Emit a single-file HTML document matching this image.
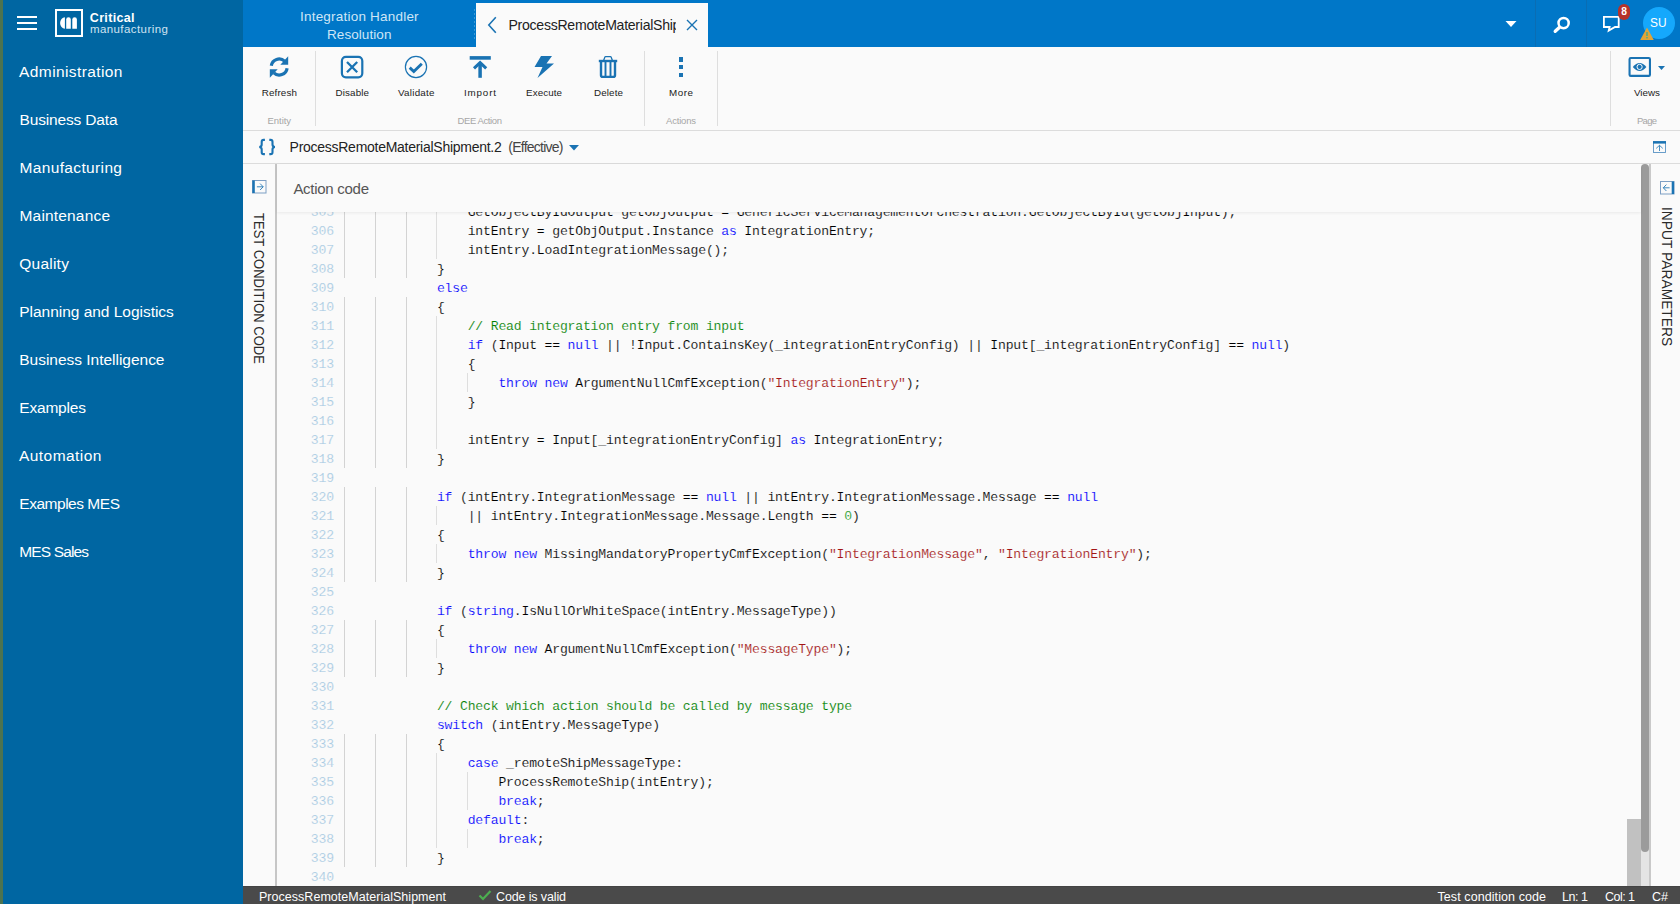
<!DOCTYPE html>
<html><head><meta charset="utf-8"><title>Critical Manufacturing</title>
<style>
*{box-sizing:border-box;margin:0;padding:0}
html,body{width:1680px;height:904px;overflow:hidden;background:#fafafa;font-family:"Liberation Sans",sans-serif}
#root{position:relative;width:1680px;height:904px;overflow:hidden;background:#fafafa}
.t{position:absolute;white-space:pre;}
.a{position:absolute}
.mono{font-family:"Liberation Mono",monospace}
#code{position:absolute;left:277px;top:212px;width:1364px;height:674px;overflow:hidden;background:#fafafa}
.ln{position:absolute;left:0;height:19px;width:1363px;font-family:"Liberation Mono",monospace;font-size:13.1px;letter-spacing:-0.172px;line-height:19px;white-space:pre;color:#000;-webkit-text-stroke:0.14px #fafafa}
.ln .no{position:absolute;left:0;width:56.9px;text-align:right;color:#a9cbe3}
.ln .tx{position:absolute;left:67.7px;top:0}
.g{position:absolute;top:0;width:1px;height:19px;background:#d3d3d3}
.g.i{background:#dedede}
.k{color:#0000ff}.s{color:#a31515}.c{color:#008000}.n{color:#1e9a28}
</style></head><body><div id="root">

<div class="a" style="left:0;top:0;width:3px;height:904px;background:#4c7350"></div>
<div class="a" style="left:3px;top:0;width:240px;height:904px;background:#0066a2"></div>
<div class="a" style="left:17px;top:16px;width:20px;height:1.75px;background:#fff"></div>
<div class="a" style="left:17px;top:22px;width:20px;height:1.75px;background:#fff"></div>
<div class="a" style="left:17px;top:28.25px;width:20px;height:1.75px;background:#fff"></div>
<div class="a" style="left:55px;top:9px;width:28px;height:28px;border:2px solid #fff"></div>
<svg class="a" style="left:55px;top:9px" width="28" height="28" viewBox="0 0 28 28">
<path d="M9.9 8.2 A4.8 5.8 0 0 0 9.9 19.8 Z" fill="#fff"/>
<path d="M11.2 19.8 V10.5 A2.3 2.3 0 0 1 15.8 10.5 V19.8 Z" fill="#fff"/>
<path d="M17.3 19.8 V10.5 A2.3 2.3 0 0 1 21.9 10.5 V19.8 Z" fill="#fff"/>
</svg>
<div class="t" style="left:89.80px;top:8.50px;font-size:12.5px;line-height:18px;letter-spacing:0.332px;color:#fff;font-weight:700;">Critical</div>
<div class="t" style="left:89.90px;top:20.50px;font-size:11.5px;line-height:16px;letter-spacing:0.427px;color:#cfe3f1;font-weight:400;">manufacturing</div>
<div class="t" style="left:19.10px;top:61.20px;font-size:15.5px;line-height:22px;letter-spacing:0.392px;color:#fff;font-weight:400;">Administration</div>
<div class="t" style="left:19.50px;top:109.20px;font-size:15.5px;line-height:22px;letter-spacing:-0.162px;color:#fff;font-weight:400;">Business Data</div>
<div class="t" style="left:19.50px;top:157.20px;font-size:15.5px;line-height:22px;letter-spacing:0.356px;color:#fff;font-weight:400;">Manufacturing</div>
<div class="t" style="left:19.50px;top:205.20px;font-size:15.5px;line-height:22px;letter-spacing:0.175px;color:#fff;font-weight:400;">Maintenance</div>
<div class="t" style="left:19.30px;top:253.20px;font-size:15.5px;line-height:22px;letter-spacing:0.227px;color:#fff;font-weight:400;">Quality</div>
<div class="t" style="left:19.30px;top:301.20px;font-size:15.5px;line-height:22px;letter-spacing:-0.029px;color:#fff;font-weight:400;">Planning and Logistics</div>
<div class="t" style="left:19.30px;top:349.20px;font-size:15.5px;line-height:22px;letter-spacing:-0.021px;color:#fff;font-weight:400;">Business Intelligence</div>
<div class="t" style="left:19.30px;top:397.20px;font-size:15.5px;line-height:22px;letter-spacing:-0.208px;color:#fff;font-weight:400;">Examples</div>
<div class="t" style="left:19.00px;top:445.20px;font-size:15.5px;line-height:22px;letter-spacing:0.443px;color:#fff;font-weight:400;">Automation</div>
<div class="t" style="left:19.30px;top:493.20px;font-size:15.5px;line-height:22px;letter-spacing:-0.477px;color:#fff;font-weight:400;">Examples MES</div>
<div class="t" style="left:19.30px;top:541.20px;font-size:15.5px;line-height:22px;letter-spacing:-0.871px;color:#fff;font-weight:400;">MES Sales</div>
<div class="a" style="left:243px;top:0;width:1437px;height:47px;background:#0077c8"></div>
<div class="t" style="left:300.00px;top:6.80px;font-size:13.5px;line-height:19px;letter-spacing:0.210px;color:#cfe6f6;font-weight:400;">Integration Handler</div>
<div class="t" style="left:327.00px;top:24.80px;font-size:13.5px;line-height:19px;letter-spacing:0.068px;color:#cfe6f6;font-weight:400;">Resolution</div>
<div class="a" style="left:476px;top:3px;width:232px;height:44px;background:#fafafa"></div>
<svg class="a" style="left:486px;top:15px" width="12" height="20" viewBox="0 0 12 20"><path d="M9.8 2.2 L2.8 10 L9.8 17.8" fill="none" stroke="#1a73b3" stroke-width="1.6"/></svg>
<div class="a" style="left:508.5px;top:12px;width:167.5px;height:28px;overflow:hidden"><div class="t" style="left:0.00px;top:3.00px;font-size:14.1px;line-height:20px;letter-spacing:-0.278px;color:#222;font-weight:400;">ProcessRemoteMaterialShip</div></div>
<svg class="a" style="left:685px;top:18px" width="14" height="14" viewBox="0 0 14 14"><path d="M2 2 L12 12 M12 2 L2 12" fill="none" stroke="#1a73b3" stroke-width="1.4"/></svg>
<div class="a" style="left:474px;top:9px;width:1px;height:31px;background:repeating-linear-gradient(to bottom,#3a9ad8 0,#3a9ad8 2px,transparent 2px,transparent 4px)"></div>
<div class="a" style="left:1535px;top:0;width:1px;height:47px;background:#0a6db3"></div>
<div class="a" style="left:1586px;top:0;width:1px;height:47px;background:#0a6db3"></div>
<svg class="a" style="left:1504px;top:20px" width="14" height="8" viewBox="0 0 14 8"><path d="M1.5 1 H12.5 L7 7 Z" fill="#fff"/></svg>
<svg class="a" style="left:1550px;top:14px" width="22" height="22" viewBox="0 0 22 22"><circle cx="13.6" cy="9.1" r="5.1" fill="none" stroke="#fff" stroke-width="2.5"/><path d="M9.6 13.2 L5.2 17.3" stroke="#fff" stroke-width="3.3" stroke-linecap="round"/></svg>
<svg class="a" style="left:1600px;top:13px" width="24" height="22" viewBox="0 0 24 22"><path d="M3.9 3.9 H18.7 V14 H15 L8.7 17.6 L9.6 14 H3.9 Z" fill="none" stroke="#fff" stroke-width="1.8" stroke-linejoin="miter"/></svg>
<div class="a" style="left:1618px;top:4px;width:12px;height:16px;border-radius:6px;background:#b5322a"></div>
<div class="t" style="left:1621.20px;top:4.60px;font-size:10.2px;line-height:14px;letter-spacing:0.000px;color:#fff;font-weight:700;">8</div>
<div class="a" style="left:1643px;top:7px;width:32px;height:32px;border-radius:16px;background:#15a8fc"></div>
<div class="t" style="left:1650px;top:13.3px;font-size:13.6px;line-height:19px;color:#fff;transform-origin:0 50%;transform:scaleX(0.875)">SU</div>
<svg class="a" style="left:1639px;top:26px" width="16" height="15" viewBox="0 0 16 15"><path d="M8 1.5 L14.8 14 H1.2 Z" fill="#e0a437"/><rect x="7.3" y="6" width="1.4" height="4" fill="#4a8"/><rect x="7.3" y="11" width="1.4" height="1.4" fill="#4a8"/></svg>
<div class="a" style="left:243px;top:130px;width:1437px;height:1px;background:#dcdcdc"></div>
<div class="a" style="left:315px;top:51px;width:1px;height:75px;background:#dedede"></div>
<div class="a" style="left:644px;top:51px;width:1px;height:75px;background:#dedede"></div>
<div class="a" style="left:717px;top:51px;width:1px;height:75px;background:#dedede"></div>
<div class="a" style="left:1610px;top:51px;width:1px;height:75px;background:#dedede"></div>
<svg class="a" style="left:267px;top:55px" width="24" height="24" viewBox="0 0 24 24" fill="none" stroke="#1a73b3" stroke-width="3.2">
<path d="M4.3 10.8 A7.9 7.9 0 0 1 17.6 6.2"/><path d="M20.1 13.2 A7.9 7.9 0 0 1 6.8 17.8"/>
<path d="M21.2 1.2 V9.7 H13.3 Z" fill="#1a73b3" stroke="none"/><path d="M2.8 22.7 V14.2 H10.7 Z" fill="#1a73b3" stroke="none"/></svg>
<svg class="a" style="left:340px;top:55px" width="24" height="24" viewBox="0 0 24 24" fill="none" stroke="#1a73b3">
<rect x="1.9" y="1.9" width="20.4" height="20.4" rx="4" stroke-width="2.2"/><path d="M7 7 L17.2 17.2 M17.2 7 L7 17.2" stroke-width="2.3"/></svg>
<svg class="a" style="left:404px;top:55px" width="24" height="24" viewBox="0 0 24 24" fill="none" stroke="#1a73b3">
<circle cx="12" cy="12" r="10.6" stroke-width="1.2"/><path d="M5.7 12.6 L9.8 16.5 L17.8 8.7" stroke-width="2.9"/></svg>
<svg class="a" style="left:468px;top:55px" width="24" height="24" viewBox="0 0 24 24" fill="none" stroke="#1a73b3">
<path d="M1.7 2.9 H22.8" stroke-width="3.6"/><path d="M12.1 22.8 V8.5" stroke-width="3.5"/><path d="M6 13.4 L12.1 7.6 L18.2 13.4" stroke-width="3"/></svg>
<svg class="a" style="left:532px;top:55px" width="24" height="24" viewBox="0 0 24 24"><path d="M9 1 H20 L14.5 8.5 H22 L5.5 23 L10.5 12 H2.5 Z" fill="#1a73b3"/></svg>
<svg class="a" style="left:596px;top:55px" width="24" height="24" viewBox="0 0 24 24" fill="none" stroke="#1a73b3">
<path d="M2.8 6 H21.2" stroke-width="2.4"/><path d="M7.6 5.5 L8.8 2.2 Q9 1.7 9.6 1.7 H14.4 Q15 1.7 15.2 2.2 L16.4 5.5" stroke-width="1.3"/>
<path d="M5 6.5 V20.3 A1.6 1.6 0 0 0 6.6 21.9 H17.4 A1.6 1.6 0 0 0 19 20.3 V6.5" stroke-width="2.4"/>
<path d="M9.5 7 V21.5 M14.5 7 V21.5" stroke-width="1.9"/></svg>
<div class="a" style="left:679px;top:57.1px;width:4.4px;height:4.6px;background:#1a73b3"></div>
<div class="a" style="left:679px;top:64.8px;width:4.4px;height:4.6px;background:#1a73b3"></div>
<div class="a" style="left:679px;top:72.5px;width:4.4px;height:4.6px;background:#1a73b3"></div>
<svg class="a" style="left:1627px;top:55px" width="26" height="24" viewBox="0 0 26 24" fill="none" stroke="#1a73b3">
<rect x="2.55" y="3.05" width="20.4" height="17.8" rx="1.2" stroke-width="2.1"/>
<path d="M5.8 11.9 Q12.6 3.9 19.4 11.9 Q12.6 19.9 5.8 11.9 Z" fill="#1a73b3" stroke="none"/><circle cx="12.6" cy="11.9" r="2.6" stroke="#fff" stroke-width="0.95"/></svg>
<svg class="a" style="left:1656.6px;top:65.2px" width="10" height="6" viewBox="0 0 10 6"><path d="M1 1 H8 L4.5 4.9 Z" fill="#1a73b3"/></svg>
<div class="t" style="left:261.70px;top:86.00px;font-size:9.8px;line-height:14px;letter-spacing:0.164px;color:#222;font-weight:400;">Refresh</div>
<div class="t" style="left:335.50px;top:86.00px;font-size:9.8px;line-height:14px;letter-spacing:0.136px;color:#222;font-weight:400;">Disable</div>
<div class="t" style="left:398.00px;top:86.00px;font-size:9.8px;line-height:14px;letter-spacing:0.259px;color:#222;font-weight:400;">Validate</div>
<div class="t" style="left:464.00px;top:86.00px;font-size:9.8px;line-height:14px;letter-spacing:0.845px;color:#222;font-weight:400;">Import</div>
<div class="t" style="left:526.00px;top:86.00px;font-size:9.8px;line-height:14px;letter-spacing:0.098px;color:#222;font-weight:400;">Execute</div>
<div class="t" style="left:594.00px;top:86.00px;font-size:9.8px;line-height:14px;letter-spacing:0.134px;color:#222;font-weight:400;">Delete</div>
<div class="t" style="left:669.00px;top:86.00px;font-size:9.8px;line-height:14px;letter-spacing:0.557px;color:#222;font-weight:400;">More</div>
<div class="t" style="left:1634.00px;top:86.00px;font-size:9.8px;line-height:14px;letter-spacing:0.009px;color:#222;font-weight:400;">Views</div>
<div class="t" style="left:267.60px;top:113.80px;font-size:9.5px;line-height:13px;letter-spacing:-0.072px;color:#a6a6a6;font-weight:400;">Entity</div>
<div class="t" style="left:457.50px;top:113.80px;font-size:9.5px;line-height:13px;letter-spacing:-0.395px;color:#a6a6a6;font-weight:400;">DEE Action</div>
<div class="t" style="left:666.00px;top:113.80px;font-size:9.5px;line-height:13px;letter-spacing:-0.192px;color:#a6a6a6;font-weight:400;">Actions</div>
<div class="t" style="left:1637.00px;top:113.80px;font-size:9.5px;line-height:13px;letter-spacing:-0.729px;color:#a6a6a6;font-weight:400;">Page</div>
<div class="a" style="left:243px;top:163px;width:1437px;height:1px;background:#dcdcdc"></div>
<svg class="a" style="left:257px;top:138px" width="20" height="18" viewBox="0 0 20 18" fill="none" stroke="#1a73b3" stroke-width="2.1">
<path d="M7.9 1.9 H6.6 Q4.7 1.9 4.7 3.8 V6.6 Q4.7 8.8 2.3 9 Q4.7 9.2 4.7 11.4 V14.2 Q4.7 16.1 6.6 16.1 H7.9"/>
<path d="M12.3 1.9 H13.6 Q15.5 1.9 15.5 3.8 V6.6 Q15.5 8.8 17.9 9 Q15.5 9.2 15.5 11.4 V14.2 Q15.5 16.1 13.6 16.1 H12.3"/></svg>
<div class="t" style="left:289.60px;top:136.70px;font-size:14px;line-height:20px;letter-spacing:-0.270px;color:#222;font-weight:400;">ProcessRemoteMaterialShipment.2</div>
<div class="t" style="left:508.30px;top:136.70px;font-size:14px;line-height:20px;letter-spacing:-0.756px;color:#444;font-weight:400;">(Effective)</div>
<svg class="a" style="left:568.3px;top:143.6px" width="12" height="8" viewBox="0 0 12 8"><path d="M1 1 H11 L6 6.5 Z" fill="#1a73b3"/></svg>
<svg class="a" style="left:1651.8px;top:139px" width="16" height="16" viewBox="0 0 16 16" fill="none" stroke="#1a73b3">
<rect x="1.5" y="2.5" width="12" height="11" stroke-width="0.9" stroke="#5a93c4"/><path d="M1 3.4 H14" stroke-width="2.4"/><path d="M7.5 12 V6.3 M4.2 9.4 L7.5 6.3 L10.8 9.4" stroke-width="0.8"/></svg>
<div class="a" style="left:275px;top:164px;width:2px;height:722px;background:#c6c6c6"></div>
<svg class="a" style="left:252px;top:180px" width="15" height="14" viewBox="0 0 15 14" fill="none" stroke="#1a73b3">
<rect x="0.5" y="0.5" width="13.5" height="12.5" stroke-width="1" stroke="#7d9fc4"/><path d="M1.6 0.5 V13" stroke-width="2.4"/><path d="M4.9 6.8 H11.2 M8.1 3.6 L11.2 6.8 L8.1 10" stroke-width="0.85"/></svg>
<div class="t" style="left:267.3px;top:212.6px;font-size:14px;line-height:16px;color:#2a2a2a;transform-origin:0 0;transform:rotate(90deg) scale(0.930,1)">TEST CONDITION CODE</div>
<div class="a" style="left:1641px;top:846px;width:8px;height:40px;background:#e4e4e4"></div>
<div class="a" style="left:1641px;top:164px;width:8px;height:688px;border-radius:4px;background:#9b9b9b"></div>
<div class="a" style="left:1649px;top:164px;width:2px;height:722px;background:#c9c9c9"></div>
<svg class="a" style="left:1659.8px;top:180.6px" width="15" height="14" viewBox="0 0 15 14" fill="none" stroke="#1a73b3">
<rect x="0.5" y="0.5" width="13.5" height="12.5" stroke-width="1" stroke="#7d9fc4"/><path d="M12.9 0.5 V13" stroke-width="2.4"/><path d="M9.6 6.8 H3.3 M6.4 3.6 L3.3 6.8 L6.4 10" stroke-width="0.85"/></svg>
<div class="t" style="left:1675.8px;top:207.3px;font-size:15px;line-height:17px;color:#2a2a2a;transform-origin:0 0;transform:rotate(90deg) scale(0.921,1)">INPUT PARAMETERS</div>
<div id="code">
<div class="ln" style="top:-9px"><i class="g" style="left:67.0px;top:-1px"></i><i class="g" style="left:97.8px;top:-1px"></i><i class="g" style="left:128.6px;top:-1px"></i><i class="g i" style="left:159.4px;top:-1px"></i><span class="no">305</span><span class="tx">                GetObjectByIdOutput getObjOutput = GenericServiceManagementOrchestration.GetObjectById(getObjInput);</span></div>
<div class="ln" style="top:10px"><i class="g" style="left:67.0px;top:-1px"></i><i class="g" style="left:97.8px;top:-1px"></i><i class="g" style="left:128.6px;top:-1px"></i><i class="g i" style="left:159.4px;top:-1px"></i><span class="no">306</span><span class="tx">                intEntry = getObjOutput.Instance <span class="k">as</span> IntegrationEntry;</span></div>
<div class="ln" style="top:29px"><i class="g" style="left:67.0px;top:-1px"></i><i class="g" style="left:97.8px;top:-1px"></i><i class="g" style="left:128.6px;top:-1px"></i><i class="g i" style="left:159.4px;top:-1px"></i><span class="no">307</span><span class="tx">                intEntry.LoadIntegrationMessage();</span></div>
<div class="ln" style="top:48px"><i class="g" style="left:67.0px;top:-1px"></i><i class="g" style="left:97.8px;top:-1px"></i><i class="g" style="left:128.6px;top:-1px"></i><span class="no">308</span><span class="tx">            }</span></div>
<div class="ln" style="top:67px"><span class="no">309</span><span class="tx">            <span class="k">else</span></span></div>
<div class="ln" style="top:86px"><i class="g" style="left:67.0px;top:-1px"></i><i class="g" style="left:97.8px;top:-1px"></i><i class="g" style="left:128.6px;top:-1px"></i><span class="no">310</span><span class="tx">            {</span></div>
<div class="ln" style="top:105px"><i class="g" style="left:67.0px;top:-1px"></i><i class="g" style="left:97.8px;top:-1px"></i><i class="g" style="left:128.6px;top:-1px"></i><i class="g i" style="left:159.4px;top:-1px"></i><span class="no">311</span><span class="tx">                <span class="c">// Read integration entry from input</span></span></div>
<div class="ln" style="top:124px"><i class="g" style="left:67.0px;top:-1px"></i><i class="g" style="left:97.8px;top:-1px"></i><i class="g" style="left:128.6px;top:-1px"></i><i class="g i" style="left:159.4px;top:-1px"></i><span class="no">312</span><span class="tx">                <span class="k">if</span> (Input == <span class="k">null</span> || !Input.ContainsKey(_integrationEntryConfig) || Input[_integrationEntryConfig] == <span class="k">null</span>)</span></div>
<div class="ln" style="top:143px"><i class="g" style="left:67.0px;top:-1px"></i><i class="g" style="left:97.8px;top:-1px"></i><i class="g" style="left:128.6px;top:-1px"></i><i class="g i" style="left:159.4px;top:-1px"></i><span class="no">313</span><span class="tx">                {</span></div>
<div class="ln" style="top:162px"><i class="g" style="left:67.0px;top:-1px"></i><i class="g" style="left:97.8px;top:-1px"></i><i class="g" style="left:128.6px;top:-1px"></i><i class="g i" style="left:159.4px;top:-1px"></i><i class="g i" style="left:190.2px;top:-1px"></i><span class="no">314</span><span class="tx">                    <span class="k">throw</span> <span class="k">new</span> ArgumentNullCmfException(<span class="s">"IntegrationEntry"</span>);</span></div>
<div class="ln" style="top:181px"><i class="g" style="left:67.0px;top:-1px"></i><i class="g" style="left:97.8px;top:-1px"></i><i class="g" style="left:128.6px;top:-1px"></i><i class="g i" style="left:159.4px;top:-1px"></i><span class="no">315</span><span class="tx">                }</span></div>
<div class="ln" style="top:200px"><i class="g" style="left:67.0px;top:-1px"></i><i class="g" style="left:97.8px;top:-1px"></i><i class="g" style="left:128.6px;top:-1px"></i><i class="g i" style="left:159.4px;top:-1px"></i><span class="no">316</span><span class="tx"></span></div>
<div class="ln" style="top:219px"><i class="g" style="left:67.0px;top:-1px"></i><i class="g" style="left:97.8px;top:-1px"></i><i class="g" style="left:128.6px;top:-1px"></i><i class="g i" style="left:159.4px;top:-1px"></i><span class="no">317</span><span class="tx">                intEntry = Input[_integrationEntryConfig] <span class="k">as</span> IntegrationEntry;</span></div>
<div class="ln" style="top:238px"><i class="g" style="left:67.0px;top:-1px"></i><i class="g" style="left:97.8px;top:-1px"></i><i class="g" style="left:128.6px;top:-1px"></i><span class="no">318</span><span class="tx">            }</span></div>
<div class="ln" style="top:257px"><span class="no">319</span><span class="tx"></span></div>
<div class="ln" style="top:276px"><i class="g" style="left:67.0px;top:-1px"></i><i class="g" style="left:97.8px;top:-1px"></i><i class="g" style="left:128.6px;top:-1px"></i><span class="no">320</span><span class="tx">            <span class="k">if</span> (intEntry.IntegrationMessage == <span class="k">null</span> || intEntry.IntegrationMessage.Message == <span class="k">null</span></span></div>
<div class="ln" style="top:295px"><i class="g" style="left:67.0px;top:-1px"></i><i class="g" style="left:97.8px;top:-1px"></i><i class="g" style="left:128.6px;top:-1px"></i><i class="g i" style="left:159.4px;top:-1px"></i><span class="no">321</span><span class="tx">                || intEntry.IntegrationMessage.Message.Length == <span class="n">0</span>)</span></div>
<div class="ln" style="top:314px"><i class="g" style="left:67.0px;top:-1px"></i><i class="g" style="left:97.8px;top:-1px"></i><i class="g" style="left:128.6px;top:-1px"></i><span class="no">322</span><span class="tx">            {</span></div>
<div class="ln" style="top:333px"><i class="g" style="left:67.0px;top:-1px"></i><i class="g" style="left:97.8px;top:-1px"></i><i class="g" style="left:128.6px;top:-1px"></i><i class="g i" style="left:159.4px;top:-1px"></i><span class="no">323</span><span class="tx">                <span class="k">throw</span> <span class="k">new</span> MissingMandatoryPropertyCmfException(<span class="s">"IntegrationMessage"</span>, <span class="s">"IntegrationEntry"</span>);</span></div>
<div class="ln" style="top:352px"><i class="g" style="left:67.0px;top:-1px"></i><i class="g" style="left:97.8px;top:-1px"></i><i class="g" style="left:128.6px;top:-1px"></i><span class="no">324</span><span class="tx">            }</span></div>
<div class="ln" style="top:371px"><span class="no">325</span><span class="tx"></span></div>
<div class="ln" style="top:390px"><span class="no">326</span><span class="tx">            <span class="k">if</span> (<span class="k">string</span>.IsNullOrWhiteSpace(intEntry.MessageType))</span></div>
<div class="ln" style="top:409px"><i class="g" style="left:67.0px;top:-1px"></i><i class="g" style="left:97.8px;top:-1px"></i><i class="g" style="left:128.6px;top:-1px"></i><span class="no">327</span><span class="tx">            {</span></div>
<div class="ln" style="top:428px"><i class="g" style="left:67.0px;top:-1px"></i><i class="g" style="left:97.8px;top:-1px"></i><i class="g" style="left:128.6px;top:-1px"></i><i class="g i" style="left:159.4px;top:-1px"></i><span class="no">328</span><span class="tx">                <span class="k">throw</span> <span class="k">new</span> ArgumentNullCmfException(<span class="s">"MessageType"</span>);</span></div>
<div class="ln" style="top:447px"><i class="g" style="left:67.0px;top:-1px"></i><i class="g" style="left:97.8px;top:-1px"></i><i class="g" style="left:128.6px;top:-1px"></i><span class="no">329</span><span class="tx">            }</span></div>
<div class="ln" style="top:466px"><span class="no">330</span><span class="tx"></span></div>
<div class="ln" style="top:485px"><span class="no">331</span><span class="tx">            <span class="c">// Check which action should be called by message type</span></span></div>
<div class="ln" style="top:504px"><span class="no">332</span><span class="tx">            <span class="k">switch</span> (intEntry.MessageType)</span></div>
<div class="ln" style="top:523px"><i class="g" style="left:67.0px;top:-1px"></i><i class="g" style="left:97.8px;top:-1px"></i><i class="g" style="left:128.6px;top:-1px"></i><span class="no">333</span><span class="tx">            {</span></div>
<div class="ln" style="top:542px"><i class="g" style="left:67.0px;top:-1px"></i><i class="g" style="left:97.8px;top:-1px"></i><i class="g" style="left:128.6px;top:-1px"></i><i class="g i" style="left:159.4px;top:-1px"></i><span class="no">334</span><span class="tx">                <span class="k">case</span> _remoteShipMessageType:</span></div>
<div class="ln" style="top:561px"><i class="g" style="left:67.0px;top:-1px"></i><i class="g" style="left:97.8px;top:-1px"></i><i class="g" style="left:128.6px;top:-1px"></i><i class="g i" style="left:159.4px;top:-1px"></i><i class="g i" style="left:190.2px;top:-1px"></i><span class="no">335</span><span class="tx">                    ProcessRemoteShip(intEntry);</span></div>
<div class="ln" style="top:580px"><i class="g" style="left:67.0px;top:-1px"></i><i class="g" style="left:97.8px;top:-1px"></i><i class="g" style="left:128.6px;top:-1px"></i><i class="g i" style="left:159.4px;top:-1px"></i><i class="g i" style="left:190.2px;top:-1px"></i><span class="no">336</span><span class="tx">                    <span class="k">break</span>;</span></div>
<div class="ln" style="top:599px"><i class="g" style="left:67.0px;top:-1px"></i><i class="g" style="left:97.8px;top:-1px"></i><i class="g" style="left:128.6px;top:-1px"></i><i class="g i" style="left:159.4px;top:-1px"></i><span class="no">337</span><span class="tx">                <span class="k">default</span>:</span></div>
<div class="ln" style="top:618px"><i class="g" style="left:67.0px;top:-1px"></i><i class="g" style="left:97.8px;top:-1px"></i><i class="g" style="left:128.6px;top:-1px"></i><i class="g i" style="left:159.4px;top:-1px"></i><i class="g i" style="left:190.2px;top:-1px"></i><span class="no">338</span><span class="tx">                    <span class="k">break</span>;</span></div>
<div class="ln" style="top:637px"><i class="g" style="left:67.0px;top:-1px"></i><i class="g" style="left:97.8px;top:-1px"></i><i class="g" style="left:128.6px;top:-1px"></i><span class="no">339</span><span class="tx">            }</span></div>
<div class="ln" style="top:656px"><span class="no">340</span><span class="tx"></span></div>
<div class="a" style="left:1350px;top:607px;width:14px;height:67px;background:#c1c1c1"></div>
</div>
<div class="a" style="left:277px;top:164px;width:1364px;height:48px;background:#fafafa;box-shadow:0 1px 3px rgba(0,0,0,0.07)"></div>
<div class="t" style="left:293.40px;top:177.50px;font-size:15px;line-height:21px;letter-spacing:-0.278px;color:#555;font-weight:400;">Action code</div>
<div class="a" style="left:243px;top:886px;width:1437px;height:18px;background:#4a4a4a;border-top:1px solid #434343"></div>
<div class="t" style="left:259.00px;top:887.50px;font-size:12.5px;line-height:18px;letter-spacing:0.029px;color:#fff;font-weight:400;">ProcessRemoteMaterialShipment</div>
<svg class="a" style="left:478px;top:889px" width="14" height="12" viewBox="0 0 14 12"><path d="M1.5 6.5 L5 10 L12.5 2" fill="none" stroke="#4caf50" stroke-width="2.2"/></svg>
<div class="t" style="left:496.00px;top:887.50px;font-size:12.5px;line-height:18px;letter-spacing:-0.130px;color:#fff;font-weight:400;">Code is valid</div>
<div class="t" style="left:1437.50px;top:887.50px;font-size:12.5px;line-height:18px;letter-spacing:0.083px;color:#fff;font-weight:400;">Test condition code</div>
<div class="t" style="left:1562.00px;top:887.50px;font-size:12.5px;line-height:18px;letter-spacing:-0.450px;color:#fff;font-weight:400;">Ln: 1</div>
<div class="t" style="left:1605.00px;top:887.50px;font-size:12.5px;line-height:18px;letter-spacing:-0.531px;color:#fff;font-weight:400;">Col: 1</div>
<div class="t" style="left:1652.00px;top:887.50px;font-size:12.5px;line-height:18px;letter-spacing:0.021px;color:#fff;font-weight:400;">C#</div>
</div></body></html>
